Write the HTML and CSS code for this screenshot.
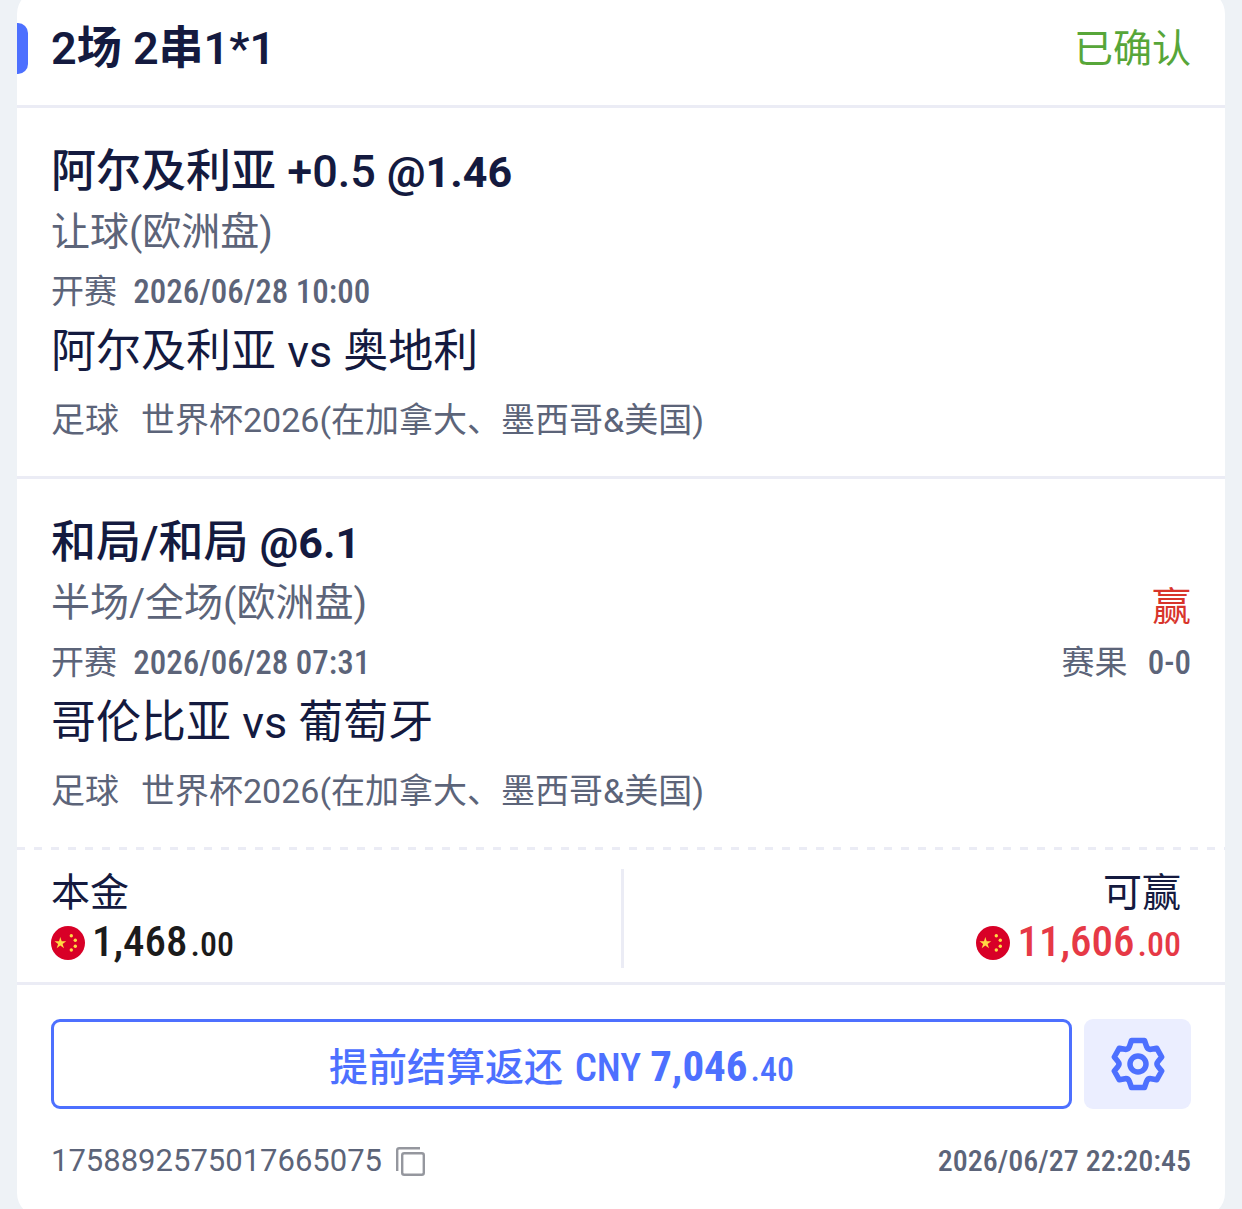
FILE: index.html
```html
<!DOCTYPE html>
<html lang="zh-CN">
<head>
  <meta charset="UTF-8">
  <meta name="viewport" content="width=device-width, initial-scale=1.0">
  <title>注单详情</title>
  <link rel="stylesheet" href="styles.css">
</head>
<body>
  <svg class="sprite" width="0" height="0" aria-hidden="true">
    <symbol id="flag-cn" viewBox="0 0 34 34">
      <circle cx="17" cy="17" r="17" fill="#d80027"/>
      <g fill="#ffda44">
        <path d="M9.300 11l1.400 4.200h4.500l-3.600 2.700 1.400 4.300-3.700-2.600-3.600 2.600 1.400-4.300L3.500 15.200H8z"/>
        <circle cx="20.300" cy="9.800" r="1.700"/>
        <circle cx="24.300" cy="14.300" r="1.700"/>
        <circle cx="24.300" cy="20.300" r="1.700"/>
        <circle cx="20.300" cy="24" r="1.700"/>
      </g>
    </symbol>
  </svg>

  <main class="card">
    <header class="card-header">
      <h1>2场 2串1*1</h1>
      <span class="status">已确认</span>
    </header>

    <section class="leg">
      <div class="leg-info">
        <h2>阿尔及利亚 +0.5 <b>@1.46</b></h2>
        <p class="market">让球(欧洲盘)</p>
        <p class="small">开赛 <time class="num">2026/06/28 10:00</time></p>
        <p class="teams">阿尔及利亚 vs 奥地利</p>
        <p class="small league"><span>足球</span><span>世界杯2026(在加拿大、墨西哥&amp;美国)</span></p>
      </div>
    </section>

    <section class="leg">
      <div class="leg-info">
        <h2>和局/和局 <b>@6.1</b></h2>
        <p class="market">半场/全场(欧洲盘)</p>
        <p class="small">开赛 <time class="num">2026/06/28 07:31</time></p>
        <p class="teams">哥伦比亚 vs 葡萄牙</p>
        <p class="small league"><span>足球</span><span>世界杯2026(在加拿大、墨西哥&amp;美国)</span></p>
      </div>
      <div class="leg-result">
        <p class="win">赢</p>
        <p class="small">赛果 <span class="num">0-0</span></p>
      </div>
    </section>

    <section class="summary">
      <div class="stake">
        <p class="label">本金</p>
        <p class="amount"><svg class="flag"><use href="#flag-cn"/></svg><span class="num">1,468<small>.00</small></span></p>
      </div>
      <div class="payout">
        <p class="label">可赢</p>
        <p class="amount"><svg class="flag"><use href="#flag-cn"/></svg><span class="num">11,606<small>.00</small></span></p>
      </div>
    </section>

    <div class="actions">
      <button type="button" class="cashout">提前结算返还 <span class="num">CNY <b>7,046</b><small>.40</small></span></button>
      <button type="button" class="settings" aria-label="设置">
        <svg width="54" height="54" viewBox="0 0 54 54" fill="none" stroke="#4d70ff" stroke-width="5.500" stroke-linejoin="round">
          <path d="M20.500 3.500h13l2.200 6.300q1.200 3 4.400 2.500l5.600-1.100 5 8.800-3.500 4.200q-2.400 2.800 0 5.600l3.500 4.200-5 8.800-5.600-1.100q-3.200-.5-4.400 2.500l-2.200 6.300h-13l-2.200-6.300q-1.200-3-4.400-2.500l-5.600 1.100-5-8.800 3.500-4.200q2.400-2.800 0-5.600L3.300 20l5-8.800 5.600 1.100q3.200.5 4.400-2.500z"/>
          <circle cx="27" cy="27" r="8"/>
        </svg>
      </button>
    </div>

    <footer class="card-footer">
      <div class="order">
        <span>1758892575017665075</span>
        <button type="button" class="copy" aria-label="复制">
          <svg width="29" height="29" viewBox="0 0 29 29" fill="none" stroke="#95979e" stroke-width="2.400">
            <path d="M1.200 24V3.200q0-2 2-2h20.800"/>
            <rect x="6.200" y="6.200" width="21.600" height="21.600" rx="2"/>
          </svg>
        </button>
      </div>
      <time class="num">2026/06/27 22:20:45</time>
    </footer>
  </main>
</body>
</html>
```
FILE: styles.css
```css
* {
  margin: 0;
  padding: 0;
  box-sizing: border-box;
}

html {
  overflow: hidden;
}

body {
  padding: 0 17px;
  font-family: Roboto, "Noto Sans CJK SC", sans-serif;
  color: #141a3f;
  background-color: #eef2f6;
}

button {
  font-family: inherit;
  border: none;
  background: none;
  cursor: pointer;
}

.sprite {
  position: absolute;
}

.num {
  font-family: "Roboto Condensed", Roboto, sans-serif;
  font-weight: 500;
}

.card {
  margin-top: -10px;
  border-radius: 24px;
  background-color: #fff;
}

.card-header {
  display: flex;
  justify-content: space-between;
  align-items: center;
  height: 118px;
  padding-top: 2px;
  padding-right: 34px;
  border-bottom: 3px solid #ebecf5;
}

.card-header h1 {
  display: flex;
  align-items: center;
  font-size: 45px;
  font-weight: 600;
  line-height: 60px;
}

.card-header h1::before {
  content: '';
  width: 11px;
  height: 51px;
  margin-right: 23px;
  border-radius: 0 10px 10px 0;
  background-color: #4d70ff;
}

.status {
  font-size: 39px;
  line-height: 60px;
  color: #57a639;
}

.leg {
  display: flex;
  justify-content: space-between;
  padding: 34px 34px 26px;
  line-height: 60px;
}

.leg + .leg {
  border-top: 3px solid #ebecf5;
}

.leg h2 {
  font-size: 45px;
  font-weight: 500;
}

.leg h2 b {
  font-size: 43px;
}

.market {
  font-size: 39px;
  color: #5c6479;
}

.small {
  font-size: 33px;
  color: #5c6479;
}

.small .num {
  margin-left: 8px;
}

.teams {
  font-size: 45px;
}

.league {
  display: flex;
  gap: 22px;
  margin-top: 8px;
  font-size: 34px;
}

.leg-result {
  padding-top: 66px;
  text-align: right;
  line-height: 56px;
}

.leg-result .num {
  margin-left: 12px;
}

.win {
  font-size: 39px;
  color: #d8342b;
}

.summary {
  display: grid;
  grid-template-columns: 1fr 1fr;
  height: 138px;
  padding: 22px 0 14px;
  border-bottom: 3px solid #ebecf5;
  background: repeating-linear-gradient(90deg, #ebecf5 0 8px, transparent 8px 17px) top / 100% 3px no-repeat;
}

.stake {
  padding-left: 34px;
}

.payout {
  display: flex;
  flex-direction: column;
  align-items: flex-end;
  padding-right: 44px;
  border-left: 3px solid #ebecf5;
}

.label {
  font-size: 39px;
  line-height: 48px;
}

.amount {
  display: flex;
  align-items: center;
  gap: 7px;
  font-size: 43px;
  line-height: 48px;
  color: #1b1b1b;
}

.payout .amount {
  color: #e63946;
}

.num small {
  margin-left: 3px;
  font-size: 34px;
}

.flag {
  width: 34px;
  height: 34px;
}

.actions {
  display: flex;
  gap: 12px;
  padding: 34px 34px 0;
}

.cashout {
  flex: 1;
  height: 90px;
  border: 3px solid #4d70ff;
  border-radius: 9px;
  font-size: 39px;
  font-weight: 500;
  color: #4d70ff;
}

.cashout b {
  font-size: 43px;
}

.cashout .num {
  margin-left: 2px;
}

.settings {
  display: flex;
  justify-content: center;
  align-items: center;
  width: 107px;
  height: 90px;
  border-radius: 9px;
  background-color: #ebeeff;
}

.card-footer {
  display: flex;
  justify-content: space-between;
  align-items: center;
  padding: 22px 34px 26px;
  font-size: 31px;
  line-height: 60px;
  color: #5c6479;
}

.card-footer .num {
  font-size: 30px;
}

.order {
  display: flex;
  align-items: center;
  gap: 14px;
}

.copy {
  display: flex;
}
```
